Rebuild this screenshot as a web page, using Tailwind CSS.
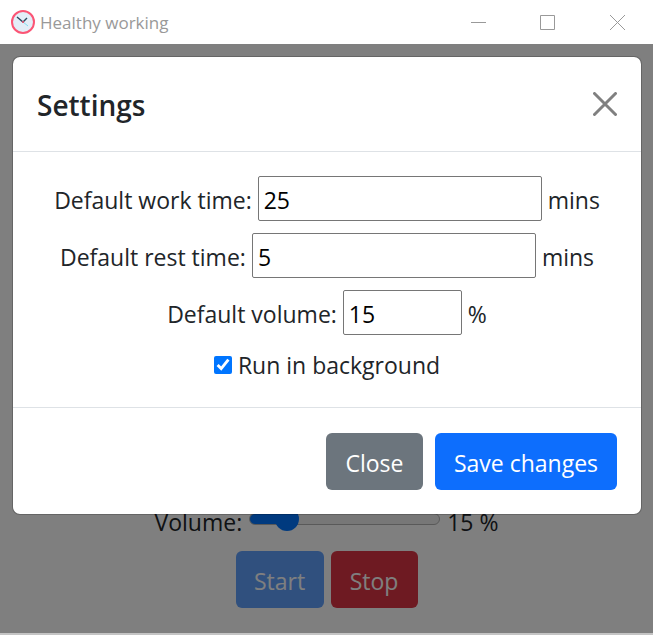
<!DOCTYPE html>
<html lang="en">
<head>
<meta charset="utf-8">
<meta name="viewport" content="width=device-width, initial-scale=1">
<title>Healthy working</title>
<script src="https://cdn.jsdelivr.net/npm/@tailwindcss/browser@4"></script>
</head>
<body class="flex min-h-screen flex-col bg-white font-['Open_Sans','Noto_Sans',sans-serif] text-[23px] leading-9 text-[#212529]">
  <header class="flex h-11 shrink-0 items-center justify-between pl-[11px] text-[#999999]">
    <div class="flex items-center gap-[5px]">
      <svg class="size-6" viewBox="0 0 24 24" fill="none" aria-hidden="true">
        <circle cx="12" cy="12" r="11" fill="#e3eef8" stroke="#fb5575" stroke-width="2"/>
        <path d="M12 12l5 4" stroke="#7fdcf0" stroke-width="1"/>
        <path d="M6 7l6 5 4-4" stroke="#2c4a5e" stroke-width="1.4"/>
        <circle cx="12" cy="12" r="1" fill="#fb5575"/>
      </svg>
      <h1 class="pt-[2px] text-[17px] leading-6">Healthy working</h1>
    </div>
    <div class="flex h-full">
      <button type="button" aria-label="Minimize" class="grid w-[69px] place-items-center"><svg class="size-[15px]" viewBox="0 0 15 15" fill="none" stroke="currentColor"><path d="M0 7.5h15"/></svg></button>
      <button type="button" aria-label="Maximize" class="grid w-[69px] place-items-center"><svg class="size-[15px]" viewBox="0 0 15 15" fill="none" stroke="currentColor"><path d="M.5.5h14v14H.5z"/></svg></button>
      <button type="button" aria-label="Close window" class="grid w-[71px] place-items-center"><svg class="size-[15px]" viewBox="0 0 15 15" fill="none" stroke="currentColor"><path d="M0 0l15 15M15 0L0 15"/></svg></button>
    </div>
  </header>

  <div class="relative flex grow flex-col border-b-2 border-[#c4c4c4]">
    <main class="flex grow flex-col items-center justify-end pb-[25px]">
      <div class="mb-[11px] flex items-center gap-[7px]">
        <label for="volume">Volume:</label>
        <input id="volume" type="range" min="0" max="100" value="15" style="--fill:19%" class="mb-[6px] h-6 w-[191px] appearance-none bg-transparent [&::-webkit-slider-runnable-track]:h-3 [&::-webkit-slider-runnable-track]:rounded-full [&::-webkit-slider-runnable-track]:border [&::-webkit-slider-runnable-track]:border-[#b2b2b2] [&::-webkit-slider-runnable-track]:bg-[linear-gradient(to_right,#0075ff_var(--fill),#efefef_var(--fill))] [&::-webkit-slider-thumb]:-mt-[7px] [&::-webkit-slider-thumb]:size-6 [&::-webkit-slider-thumb]:appearance-none [&::-webkit-slider-thumb]:rounded-full [&::-webkit-slider-thumb]:bg-[#0075ff]">
        <output for="volume">15 %</output>
      </div>
      <div class="flex gap-[7px]">
        <button type="button" disabled class="h-[57px] w-[88px] rounded-md bg-[#0d6efd] pt-[2px] text-white opacity-65">Start</button>
        <button type="button" class="h-[57px] w-[87px] rounded-md bg-[#dc3545] pt-[2px] text-white">Stop</button>
      </div>
    </main>

    <div class="absolute inset-0 bg-black/50 py-3 pr-[11px] pl-3">
      <section role="dialog" aria-modal="true" aria-labelledby="settings-title" class="rounded-lg border border-black/20 bg-white bg-clip-padding">
        <div class="flex h-[95px] items-center justify-between border-b border-[#dee2e6] px-6">
          <h2 id="settings-title" class="pt-[2px] text-[28px] font-semibold">Settings</h2>
          <button type="button" aria-label="Close"><svg class="size-6" viewBox="0 0 24 24" fill="none" stroke="#808080" stroke-width="3" stroke-linecap="round"><path d="M1.5 1.5l21 21M22.5 1.5l-21 21"/></svg></button>
        </div>
        <form id="settings" class="flex flex-col items-center gap-3 p-6">
          <div class="flex items-center gap-[6px]">
            <label for="work" class="pt-[2px]">Default work time:</label>
            <input id="work" type="text" value="25" class="h-[45px] w-[284px] rounded-xs border border-[#767676] px-[5px] pt-[2px] text-black">
            <span class="pt-[2px]">mins</span>
          </div>
          <div class="flex items-center gap-[6px]">
            <label for="rest" class="pt-[2px]">Default rest time:</label>
            <input id="rest" type="text" value="5" class="h-[45px] w-[284px] rounded-xs border border-[#767676] px-[5px] pt-[2px] text-black">
            <span class="pt-[2px]">mins</span>
          </div>
          <div class="flex items-center gap-[6px]">
            <label for="default-volume" class="pt-[2px]">Default volume:</label>
            <input id="default-volume" type="text" value="15" class="h-[45px] w-[119px] rounded-xs border border-[#767676] px-[5px] pt-[2px] text-black">
            <span class="pt-[2px]">%</span>
          </div>
          <div class="flex items-center gap-[6px]">
            <input id="background" type="checkbox" checked class="size-[18px] accent-[#0075ff]">
            <label for="background">Run in background</label>
          </div>
        </form>
        <div class="flex justify-end gap-3 border-t border-[#dee2e6] px-6 pt-[25px] pb-6">
          <button type="button" class="h-[57px] w-[97px] rounded-md bg-[#6c757d] pt-[2px] text-white">Close</button>
          <button type="submit" form="settings" class="h-[57px] w-[182px] rounded-md bg-[#0d6efd] pt-[2px] text-white">Save changes</button>
        </div>
      </section>
    </div>
  </div>
</body>
</html>
